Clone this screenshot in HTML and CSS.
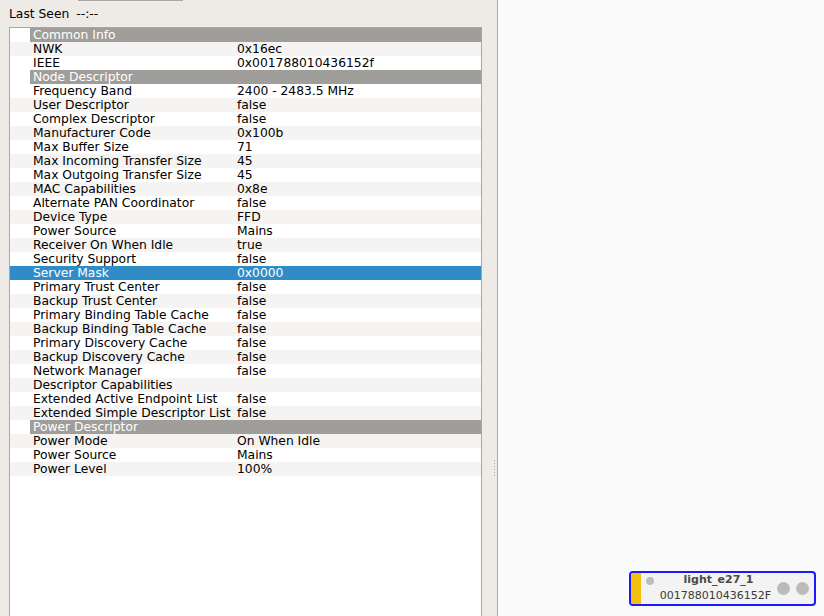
FILE: index.html
```html
<!DOCTYPE html>
<html>
<head>
<meta charset="utf-8">
<link rel="stylesheet" href="styles.css">
</head>
<body>
<div class="app">
  <div class="left">
    <div class="topbtn"></div>
    <div class="lastseen"><span>Last Seen</span><span>--:--</span></div>
    <div class="table">
      <div class="row hdr"><span class="ind"></span><span class="sec">Common Info</span></div>
      <div class="row odd"><span class="ind"></span><span class="k">NWK</span><span class="v">0x16ec</span></div>
      <div class="row"><span class="ind"></span><span class="k">IEEE</span><span class="v">0x001788010436152f</span></div>
      <div class="row hdr"><span class="ind"></span><span class="sec">Node Descriptor</span></div>
      <div class="row"><span class="ind"></span><span class="k">Frequency Band</span><span class="v">2400 - 2483.5 MHz</span></div>
      <div class="row odd"><span class="ind"></span><span class="k">User Descriptor</span><span class="v">false</span></div>
      <div class="row"><span class="ind"></span><span class="k">Complex Descriptor</span><span class="v">false</span></div>
      <div class="row odd"><span class="ind"></span><span class="k">Manufacturer Code</span><span class="v">0x100b</span></div>
      <div class="row"><span class="ind"></span><span class="k">Max Buffer Size</span><span class="v">71</span></div>
      <div class="row odd"><span class="ind"></span><span class="k">Max Incoming Transfer Size</span><span class="v">45</span></div>
      <div class="row"><span class="ind"></span><span class="k">Max Outgoing Transfer Size</span><span class="v">45</span></div>
      <div class="row odd"><span class="ind"></span><span class="k">MAC Capabilities</span><span class="v">0x8e</span></div>
      <div class="row"><span class="ind"></span><span class="k">Alternate PAN Coordinator</span><span class="v">false</span></div>
      <div class="row odd"><span class="ind"></span><span class="k">Device Type</span><span class="v">FFD</span></div>
      <div class="row"><span class="ind"></span><span class="k">Power Source</span><span class="v">Mains</span></div>
      <div class="row odd"><span class="ind"></span><span class="k">Receiver On When Idle</span><span class="v">true</span></div>
      <div class="row"><span class="ind"></span><span class="k">Security Support</span><span class="v">false</span></div>
      <div class="row sel"><span class="ind"></span><span class="k">Server Mask</span><span class="v">0x0000</span></div>
      <div class="row"><span class="ind"></span><span class="k">Primary Trust Center</span><span class="v">false</span></div>
      <div class="row odd"><span class="ind"></span><span class="k">Backup Trust Center</span><span class="v">false</span></div>
      <div class="row"><span class="ind"></span><span class="k">Primary Binding Table Cache</span><span class="v">false</span></div>
      <div class="row odd"><span class="ind"></span><span class="k">Backup Binding Table Cache</span><span class="v">false</span></div>
      <div class="row"><span class="ind"></span><span class="k">Primary Discovery Cache</span><span class="v">false</span></div>
      <div class="row odd"><span class="ind"></span><span class="k">Backup Discovery Cache</span><span class="v">false</span></div>
      <div class="row"><span class="ind"></span><span class="k">Network Manager</span><span class="v">false</span></div>
      <div class="row odd"><span class="ind"></span><span class="k">Descriptor Capabilities</span><span class="v"></span></div>
      <div class="row"><span class="ind"></span><span class="k">Extended Active Endpoint List</span><span class="v">false</span></div>
      <div class="row odd"><span class="ind"></span><span class="k">Extended Simple Descriptor List</span><span class="v">false</span></div>
      <div class="row hdr"><span class="ind"></span><span class="sec">Power Descriptor</span></div>
      <div class="row odd"><span class="ind"></span><span class="k">Power Mode</span><span class="v">On When Idle</span></div>
      <div class="row"><span class="ind"></span><span class="k">Power Source</span><span class="v">Mains</span></div>
      <div class="row odd"><span class="ind"></span><span class="k">Power Level</span><span class="v">100%</span></div>
    </div>
  </div>
  <div class="splitter">
    <div class="grip"><i></i><i></i><i></i><i></i><i></i><i></i></div>
  </div>
  <div class="canvas">
    <div class="node">
      <div class="bar"></div>
      <div class="dot"></div>
      <div class="label">
        <div class="title">light_e27_1</div>
        <div class="serial">001788010436152F</div>
      </div>
      <div class="ports"><span class="port"></span><span class="port"></span></div>
    </div>
  </div>
</div>
</body>
</html>
```

FILE: styles.css
```css
html, body {
  margin: 0;
  padding: 0;
  width: 824px;
  height: 616px;
  overflow: hidden;
  font-family: "DejaVu Sans", "Liberation Sans", sans-serif;
  font-size: 12.3px;
  color: #000;
}

.app {
  display: flex;
  width: 824px;
  height: 616px;
  background: #eeebe7;
}

.left {
  width: 482px;
  flex: none;
  display: flex;
  flex-direction: column;
  padding-left: 9px;
  box-sizing: border-box;
}

.topbtn {
  height: 1px;
  width: 105px;
  margin-left: 69px;
  background: #aaa7a2;
  flex: none;
}

.lastseen {
  margin-top: 6px;
  height: 14px;
  line-height: 14px;
  display: flex;
  gap: 7px;
  flex: none;
}

.table {
  margin-top: 6px;
  flex: 1;
  background: #fff;
  border: 1px solid #aaa7a2;
  border-bottom: none;
  overflow: hidden;
}

.row {
  display: grid;
  grid-template-columns: 20px 204px 1fr;
  height: 14px;
  line-height: 14px;
  white-space: nowrap;
}

.row.odd {
  background: #f5f4f2;
}

.row.sel {
  background: #308cc6;
  color: #fff;
}

.row .k {
  padding-left: 3px;
  overflow: hidden;
}

.row .v {
  padding-left: 3px;
}

.row.hdr .sec {
  grid-column: 2 / 4;
  background: #a09e9a;
  color: #fff;
  padding-left: 3px;
}

.splitter {
  width: 15px;
  flex: none;
  display: flex;
  flex-direction: column;
}

.grip {
  margin-top: 460px;
  margin-left: 12px;
  display: flex;
  flex-direction: column;
  gap: 2px;
}

.grip i {
  display: block;
  width: 1px;
  height: 1px;
  background: #aaa6a0;
}

.canvas {
  flex: 1;
  background: #fafafa;
  border-left: 1px solid #aaa7a2;
  position: relative;
}

.node {
  position: absolute;
  left: 131px;
  top: 571px;
  width: 187px;
  height: 35px;
  box-sizing: border-box;
  border: 2px solid #1a1aff;
  border-radius: 4px;
  background: #f3f3f3;
  display: flex;
  overflow: hidden;
}

.bar {
  width: 10px;
  flex: none;
  background: #f2bf0c;
}

.dot {
  width: 8px;
  height: 8px;
  border-radius: 50%;
  background: #bdbdbd;
  margin-left: 5px;
  margin-top: 4px;
  flex: none;
}

.label {
  flex: 1;
  text-align: center;
  font-size: 11px;
  line-height: 13px;
}

.title {
  font-weight: bold;
  color: #4a4a4a;
  padding-left: 6px;
}

.serial {
  margin-top: 3px;
  color: #3a3a3a;
}

.ports {
  display: flex;
  gap: 6px;
  margin-top: 9px;
  margin-right: 5px;
  flex: none;
}

.port {
  width: 13px;
  height: 13px;
  border-radius: 50%;
  background: #bbbbbb;
}
```
